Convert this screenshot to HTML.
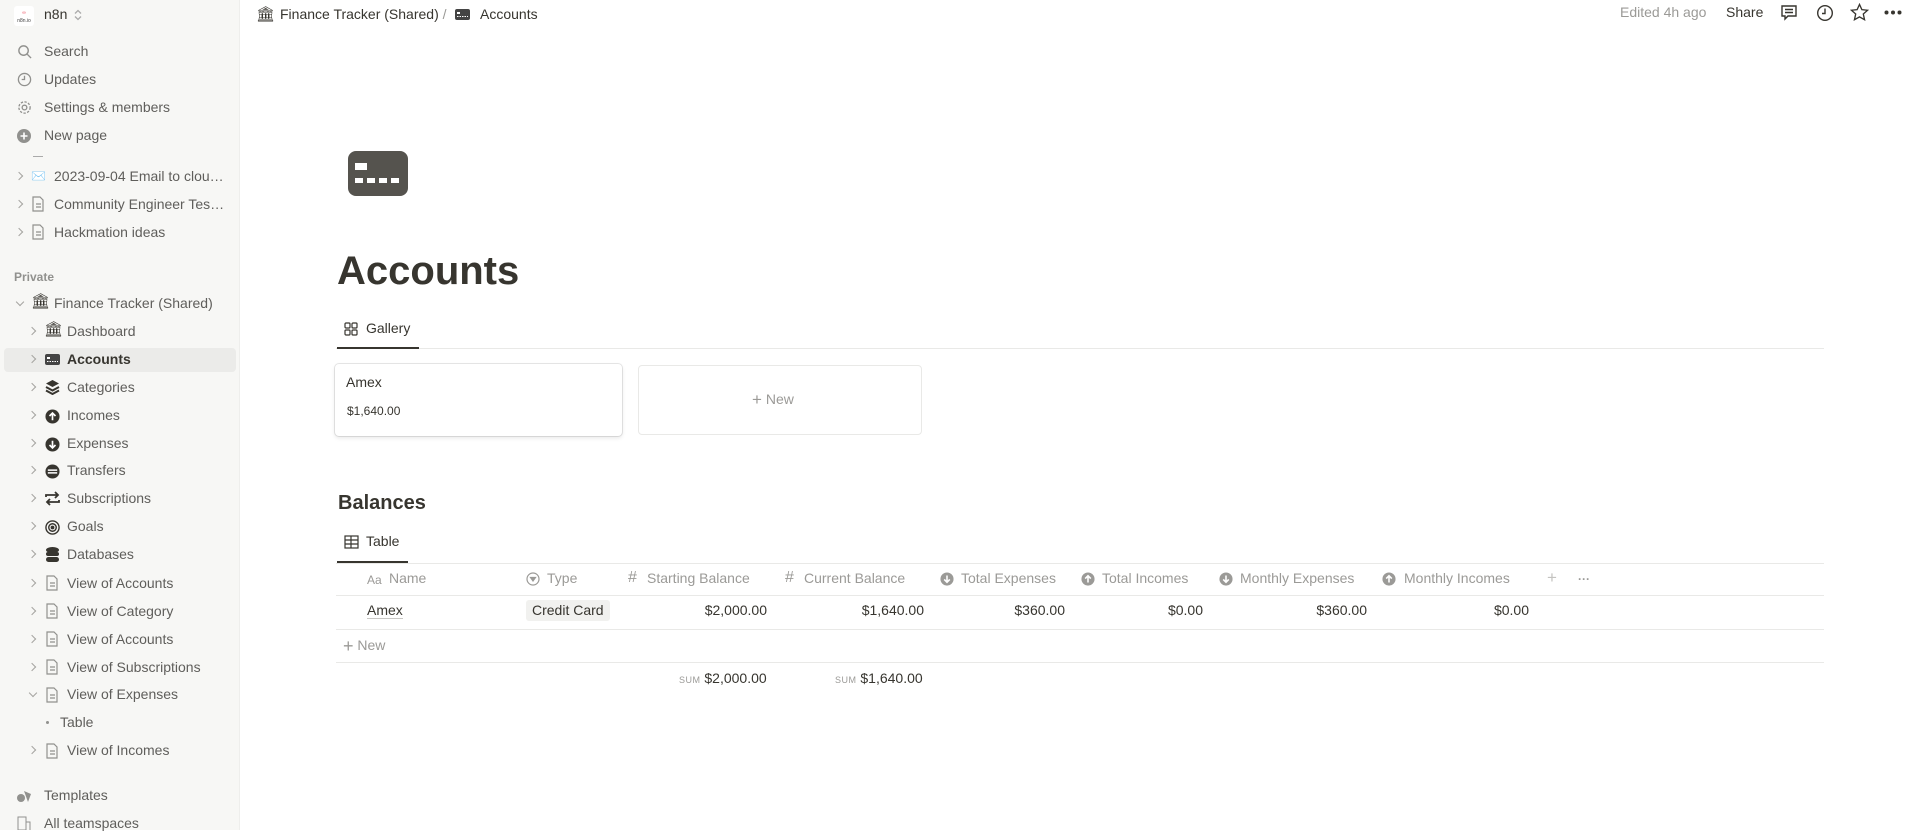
<!DOCTYPE html>
<html><head><meta charset="utf-8"><style>
*{margin:0;padding:0;box-sizing:border-box}
body{width:1919px;height:830px;overflow:hidden;background:#fff;font-family:"Liberation Sans",sans-serif;color:#37352f;position:relative}
.a{position:absolute;white-space:nowrap}
#sb{position:absolute;left:0;top:0;width:240px;height:830px;background:#f7f7f5;border-right:1px solid #eeeeec}
.si{position:absolute;font-size:14px;color:#5f5e5b;line-height:18px;white-space:nowrap}
.ic{position:absolute}
.chev{position:absolute;width:6px;height:6px;border-right:1.3px solid #a5a4a0;border-bottom:1.3px solid #a5a4a0;transform:rotate(-45deg)}
.chev.d{transform:rotate(45deg)}
.g{color:#9b9a97}
.hd{position:absolute;top:570px;font-size:14px;color:#9b9a97;white-space:nowrap}
.v{position:absolute;top:602px;font-size:14px;text-align:right;width:120px}
.hl{position:absolute;left:336px;width:1488px;height:1px;background:#e9e9e7}
</style></head><body>
<div id="sb">
<div class="a" style="left:14px;top:6px;width:20px;height:20px;background:#fff;border-radius:3px;font-size:5px;color:#e56;text-align:center;line-height:8px;padding-top:3px">∞<br><span style="color:#444">n8n.io</span></div>
<div class="a" style="left:44px;top:6px;font-size:14px;color:#37352f">n8n</div>
<svg class="ic" style="left:74px;top:9px" width="8" height="12" viewBox="0 0 8 12" fill="none" stroke="#aaa" stroke-width="1.3"><path d="M1 4.5L4 1.5 7 4.5M1 7.5L4 10.5 7 7.5"/></svg>

<svg class="ic" style="left:17px;top:44px" width="15" height="15" viewBox="0 0 16 16" fill="none" stroke="#91918e" stroke-width="1.5"><circle cx="7" cy="7" r="5"/><path d="M11 11l4 4"/></svg>
<div class="si" style="left:44px;top:42px">Search</div>
<svg class="ic" style="left:17px;top:72px" width="15" height="15" viewBox="0 0 16 16" fill="none" stroke="#91918e" stroke-width="1.4"><circle cx="8" cy="8" r="6.5"/><path d="M8 4v4H5"/></svg>
<div class="si" style="left:44px;top:70px">Updates</div>
<svg class="ic" style="left:17px;top:100px" width="15" height="15" viewBox="0 0 16 16" fill="none" stroke="#91918e" stroke-width="1.4"><circle cx="8" cy="8" r="2.5"/><circle cx="8" cy="8" r="6" stroke-dasharray="2.5 1.5"/></svg>
<div class="si" style="left:44px;top:98px">Settings &amp; members</div>
<svg class="ic" style="left:16px;top:128px" width="16" height="16" viewBox="0 0 16 16"><circle cx="8" cy="8" r="7" fill="#91918e"/><path d="M8 4.5v7M4.5 8h7" stroke="#fff" stroke-width="1.6"/></svg>
<div class="si" style="left:44px;top:126px">New page</div>
<div class="a" style="left:33px;top:156px;width:10px;height:1px;background:#aaa"></div>

<div class="chev" style="left:16px;top:173px"></div><div class="si" style="left:31px;top:167px;font-size:12px">✉️</div><div class="si" style="left:54px;top:167px">2023-09-04 Email to clou…</div>
<div class="chev" style="left:16px;top:201px"></div><svg class="ic" style="left:31px;top:196px" width="14" height="16" viewBox="0 0 14 16" fill="none" stroke="#91918e" stroke-width="1.2"><path d="M2 1h7l3 3v11H2z M5 8h5M5 11h5"/></svg><div class="si" style="left:54px;top:195px">Community Engineer Tes…</div>
<div class="chev" style="left:16px;top:229px"></div><svg class="ic" style="left:31px;top:224px" width="14" height="16" viewBox="0 0 14 16" fill="none" stroke="#91918e" stroke-width="1.2"><path d="M2 1h7l3 3v11H2z M5 8h5M5 11h5"/></svg><div class="si" style="left:54px;top:223px">Hackmation ideas</div>

<div class="si" style="left:14px;top:268px;font-size:12px;color:#91918e;font-weight:bold">Private</div>
<div class="chev d" style="left:17px;top:299px"></div><div class="si" style="left:31px;top:293px;font-size:15px;color:#37352f">🏛</div><div class="si" style="left:54px;top:294px">Finance Tracker (Shared)</div>

<div class="a" style="left:4px;top:348px;width:232px;height:24px;background:#ebebe9;border-radius:4px"></div>
<div class="chev" style="left:29px;top:328px"></div><div class="si" style="left:44px;top:321px;font-size:15px;color:#37352f">🏛</div><div class="si" style="left:67px;top:322px">Dashboard</div>
<div class="chev" style="left:29px;top:356px"></div><svg class="ic" style="left:45px;top:354px" width="15" height="11" viewBox="0 0 15 11"><rect width="15" height="11" rx="2" fill="#444"/><rect x="2" y="3" width="3" height="2" fill="#fff"/><path d="M2 7.5h11" stroke="#fff" stroke-dasharray="1.5 1"/></svg><div class="si" style="left:67px;top:350px;color:#37352f;font-weight:bold">Accounts</div>
<div class="chev" style="left:29px;top:384px"></div><svg class="ic" style="left:45px;top:379px" width="15" height="16" viewBox="0 0 15 16"><path d="M7.5 1L14 4.5 7.5 8 1 4.5z" fill="#37352f"/><path d="M1 8l6.5 3.5L14 8M1 11.5L7.5 15 14 11.5" fill="none" stroke="#37352f" stroke-width="2"/></svg><div class="si" style="left:67px;top:378px">Categories</div>
<svg class="ic" style="left:45px;top:409px" width="15" height="15" viewBox="0 0 16 16"><circle cx="8" cy="8" r="7.5" fill="#37352f"/><path d="M8 12V4.5M4.8 7.5L8 4.3l3.2 3.2" stroke="#fff" stroke-width="1.8" fill="none"/></svg><div class="chev" style="left:29px;top:412px"></div><div class="si" style="left:67px;top:406px">Incomes</div>
<svg class="ic" style="left:45px;top:437px" width="15" height="15" viewBox="0 0 16 16"><circle cx="8" cy="8" r="7.5" fill="#37352f"/><path d="M8 4v7.5M4.8 8.5L8 11.7l3.2-3.2" stroke="#fff" stroke-width="1.8" fill="none"/></svg><div class="chev" style="left:29px;top:440px"></div><div class="si" style="left:67px;top:434px">Expenses</div>
<svg class="ic" style="left:45px;top:464px" width="15" height="15" viewBox="0 0 16 16"><circle cx="8" cy="8" r="7.5" fill="#37352f"/><path d="M3 6.5h10M3 9.5h10" stroke="#fff" stroke-width="1.6"/></svg><div class="chev" style="left:29px;top:467px"></div><div class="si" style="left:67px;top:461px">Transfers</div>
<div class="chev" style="left:29px;top:495px"></div><svg class="ic" style="left:45px;top:491px" width="15" height="15" viewBox="0 0 15 15" fill="none" stroke="#37352f" stroke-width="1.8"><path d="M1 6V4h12M10 1l3 3-3 3M14 9v2H2M5 14l-3-3 3-3"/></svg><div class="si" style="left:67px;top:489px">Subscriptions</div>
<svg class="ic" style="left:45px;top:520px" width="15" height="15" viewBox="0 0 16 16" fill="none" stroke="#37352f" stroke-width="1.5"><circle cx="8" cy="8" r="7"/><circle cx="8" cy="8" r="4"/><circle cx="8" cy="8" r="1.3" fill="#37352f"/></svg><div class="chev" style="left:29px;top:523px"></div><div class="si" style="left:67px;top:517px">Goals</div>
<svg class="ic" style="left:46px;top:547px" width="13" height="16" viewBox="0 0 13 16"><ellipse cx="6.5" cy="3" rx="6.5" ry="3" fill="#37352f"/><rect y="5" width="13" height="4" rx="2" fill="#37352f"/><rect y="10" width="13" height="5" rx="2.5" fill="#37352f"/></svg><div class="chev" style="left:29px;top:551px"></div><div class="si" style="left:67px;top:545px">Databases</div>

<div class="chev" style="left:29px;top:580px"></div><svg class="ic" style="left:45px;top:575px" width="14" height="16" viewBox="0 0 14 16" fill="none" stroke="#91918e" stroke-width="1.2"><path d="M2 1h7l3 3v11H2z M5 8h5M5 11h5"/></svg><div class="si" style="left:67px;top:574px">View of Accounts</div>
<div class="chev" style="left:29px;top:608px"></div><svg class="ic" style="left:45px;top:603px" width="14" height="16" viewBox="0 0 14 16" fill="none" stroke="#91918e" stroke-width="1.2"><path d="M2 1h7l3 3v11H2z M5 8h5M5 11h5"/></svg><div class="si" style="left:67px;top:602px">View of Category</div>
<div class="chev" style="left:29px;top:636px"></div><svg class="ic" style="left:45px;top:631px" width="14" height="16" viewBox="0 0 14 16" fill="none" stroke="#91918e" stroke-width="1.2"><path d="M2 1h7l3 3v11H2z M5 8h5M5 11h5"/></svg><div class="si" style="left:67px;top:630px">View of Accounts</div>
<div class="chev" style="left:29px;top:664px"></div><svg class="ic" style="left:45px;top:659px" width="14" height="16" viewBox="0 0 14 16" fill="none" stroke="#91918e" stroke-width="1.2"><path d="M2 1h7l3 3v11H2z M5 8h5M5 11h5"/></svg><div class="si" style="left:67px;top:658px">View of Subscriptions</div>
<div class="chev d" style="left:30px;top:690px"></div><svg class="ic" style="left:45px;top:687px" width="14" height="16" viewBox="0 0 14 16" fill="none" stroke="#91918e" stroke-width="1.2"><path d="M2 1h7l3 3v11H2z M5 8h5M5 11h5"/></svg><div class="si" style="left:67px;top:685px">View of Expenses</div>
<div class="a" style="left:46px;top:721px;width:3px;height:3px;border-radius:50%;background:#91918e"></div><div class="si" style="left:60px;top:713px">Table</div>
<div class="chev" style="left:29px;top:747px"></div><svg class="ic" style="left:45px;top:743px" width="14" height="16" viewBox="0 0 14 16" fill="none" stroke="#91918e" stroke-width="1.2"><path d="M2 1h7l3 3v11H2z M5 8h5M5 11h5"/></svg><div class="si" style="left:67px;top:741px">View of Incomes</div>

<svg class="ic" style="left:16px;top:789px" width="17" height="15" viewBox="0 0 17 15"><circle cx="5" cy="9" r="4" fill="#91918e"/><path d="M8 2l7 3-3 8z" fill="#91918e"/></svg><div class="si" style="left:44px;top:786px">Templates</div>
<svg class="ic" style="left:17px;top:816px" width="14" height="14" viewBox="0 0 14 14" fill="none" stroke="#91918e"><rect x="1" y="1" width="8" height="13"/><path d="M9 6h4v8"/></svg><div class="si" style="left:44px;top:814px">All teamspaces</div>
</div>

<!-- top bar -->
<div class="a" style="left:256px;top:5px;font-size:15px">🏛</div>
<div class="a" style="left:280px;top:6px;font-size:14px">Finance Tracker (Shared) <span class="g">/</span></div>
<svg class="ic" style="left:455px;top:9px" width="15" height="11" viewBox="0 0 15 11"><rect width="15" height="11" rx="2" fill="#444"/><rect x="2" y="3" width="3" height="2" fill="#fff"/><path d="M2 7.5h11" stroke="#fff" stroke-dasharray="1.5 1"/></svg>
<div class="a" style="left:480px;top:6px;font-size:14px">Accounts</div>
<div class="a g" style="left:1620px;top:4px;font-size:14px">Edited 4h ago</div>
<div class="a" style="left:1726px;top:4px;font-size:14px">Share</div>
<svg class="ic" style="left:1780px;top:4px" width="18" height="18" viewBox="0 0 18 18" fill="none" stroke="#37352f" stroke-width="1.4"><path d="M2 2h14v10H8l-3 3v-3H2z M5 5.5h8M5 8.5h8"/></svg>
<svg class="ic" style="left:1816px;top:4px" width="18" height="18" viewBox="0 0 18 18" fill="none" stroke="#37352f" stroke-width="1.4"><circle cx="9" cy="9" r="7.3"/><path d="M9 4.5v5H6"/></svg>
<svg class="ic" style="left:1850px;top:3px" width="19" height="19" viewBox="0 0 20 20" fill="none" stroke="#37352f" stroke-width="1.4"><path d="M10 1.5l2.5 5.5 6 .6-4.5 4 1.3 6L10 14.6 4.7 17.6 6 11.6l-4.5-4 6-.6z"/></svg>
<svg class="ic" style="left:1884px;top:10px" width="18" height="5" viewBox="0 0 18 5" fill="#37352f"><circle cx="2.5" cy="2.5" r="2"/><circle cx="9" cy="2.5" r="2"/><circle cx="15.5" cy="2.5" r="2"/></svg>

<!-- page icon -->
<svg class="ic" style="left:348px;top:151px" width="60" height="45" viewBox="0 0 60 45"><rect width="60" height="45" rx="8" fill="#55534e"/><rect x="7" y="12" width="12" height="7" fill="#fff"/><rect x="7" y="27" width="8" height="5" fill="#fff"/><rect x="19" y="27" width="8" height="5" fill="#fff"/><rect x="31" y="27" width="8" height="5" fill="#fff"/><rect x="43" y="27" width="8" height="5" fill="#fff"/></svg>
<div class="a" style="left:337px;top:249px;font-size:40px;font-weight:bold;color:#37352f">Accounts</div>

<!-- gallery tab -->
<svg class="ic" style="left:344px;top:322px" width="14" height="14" viewBox="0 0 14 14" fill="none" stroke="#37352f" stroke-width="1.2"><rect x="1" y="1" width="5" height="5" rx="1"/><rect x="8" y="1" width="5" height="5" rx="1"/><rect x="1" y="8" width="5" height="5" rx="1"/><rect x="8" y="8" width="5" height="5" rx="1"/></svg>
<div class="a" style="left:366px;top:320px;font-size:14px">Gallery</div>
<div class="hl" style="top:348px"></div>
<div class="a" style="left:337px;top:347px;width:82px;height:2px;background:#37352f"></div>

<div class="a" style="left:335px;top:364px;width:287px;height:72px;border-radius:4px;box-shadow:0 0 0 1px rgba(15,15,15,.1),0 2px 4px rgba(15,15,15,.1)"></div>
<div class="a" style="left:346px;top:374px;font-size:14px">Amex</div>
<div class="a" style="left:347px;top:404px;font-size:12px">$1,640.00</div>
<div class="a" style="left:638px;top:365px;width:284px;height:70px;border:1px solid #e9e9e7;border-radius:4px"></div>
<div class="a g" style="left:752px;top:390px;font-size:14px"><span style="font-size:17px;vertical-align:-1px">+</span> New</div>

<!-- balances -->
<div class="a" style="left:338px;top:492px;font-size:20px;font-weight:bold">Balances</div>
<svg class="ic" style="left:344px;top:535px" width="15" height="14" viewBox="0 0 15 14" fill="none" stroke="#37352f" stroke-width="1.2"><rect x="1" y="1" width="13" height="12"/><path d="M1 5h13M1 9h13M7 1v12"/></svg>
<div class="a" style="left:366px;top:533px;font-size:14px">Table</div>
<div class="hl" style="top:563px"></div>
<div class="a" style="left:337px;top:561px;width:71px;height:2px;background:#37352f"></div>

<div class="hd" style="left:367px;font-size:12px;top:573px">Aa</div><div class="hd" style="left:389px">Name</div>
<svg class="ic" style="left:526px;top:572px" width="14" height="14" viewBox="0 0 14 14" fill="none" stroke="#9b9a97" stroke-width="1.2"><circle cx="7" cy="7" r="6"/><path d="M4.5 5.5h5L7 9z" fill="#9b9a97"/></svg><div class="hd" style="left:547px">Type</div>
<div class="hd" style="left:628px;font-size:16px;top:569px">#</div><div class="hd" style="left:647px">Starting Balance</div>
<div class="hd" style="left:785px;font-size:16px;top:569px">#</div><div class="hd" style="left:804px">Current Balance</div>
<svg class="ic" style="left:940px;top:572px" width="14" height="14" viewBox="0 0 16 16"><circle cx="8" cy="8" r="7.5" fill="#9b9a97"/><path d="M8 4v7.5M4.8 8.5L8 11.7l3.2-3.2" stroke="#fff" stroke-width="1.8" fill="none"/></svg><div class="hd" style="left:961px">Total Expenses</div>
<svg class="ic" style="left:1081px;top:572px" width="14" height="14" viewBox="0 0 16 16"><circle cx="8" cy="8" r="7.5" fill="#9b9a97"/><path d="M8 12V4.5M4.8 7.5L8 4.3l3.2 3.2" stroke="#fff" stroke-width="1.8" fill="none"/></svg><div class="hd" style="left:1102px">Total Incomes</div>
<svg class="ic" style="left:1219px;top:572px" width="14" height="14" viewBox="0 0 16 16"><circle cx="8" cy="8" r="7.5" fill="#9b9a97"/><path d="M8 4v7.5M4.8 8.5L8 11.7l3.2-3.2" stroke="#fff" stroke-width="1.8" fill="none"/></svg><div class="hd" style="left:1240px">Monthly Expenses</div>
<svg class="ic" style="left:1382px;top:572px" width="14" height="14" viewBox="0 0 16 16"><circle cx="8" cy="8" r="7.5" fill="#9b9a97"/><path d="M8 12V4.5M4.8 7.5L8 4.3l3.2 3.2" stroke="#fff" stroke-width="1.8" fill="none"/></svg><div class="hd" style="left:1404px">Monthly Incomes</div>
<div class="hd" style="left:1547px;font-size:17px;top:568px;color:#c4c3c0">+</div>
<div class="hd" style="left:1578px;font-size:12px;top:572px;font-weight:bold">···</div>
<div class="hl" style="top:595px"></div>

<div class="a" style="left:367px;top:602px;font-size:14px;border-bottom:1px solid #c8c7c4;line-height:16px">Amex</div>
<div class="a" style="left:526px;top:600px;height:21px;padding:0 6px;background:#f1f1ef;border-radius:3px;font-size:14px;line-height:21px">Credit Card</div>
<div class="v" style="left:647px">$2,000.00</div>
<div class="v" style="left:804px">$1,640.00</div>
<div class="v" style="left:945px">$360.00</div>
<div class="v" style="left:1083px">$0.00</div>
<div class="v" style="left:1247px">$360.00</div>
<div class="v" style="left:1409px">$0.00</div>
<div class="hl" style="top:629px"></div>
<div class="a g" style="left:343px;top:636px;font-size:14px"><span style="font-size:18px;vertical-align:-2px">+</span> New</div>
<div class="hl" style="top:662px"></div>
<div class="a" style="left:679px;top:670px;font-size:14px"><span class="g" style="font-size:9px;letter-spacing:.5px">SUM</span> $2,000.00</div>
<div class="a" style="left:835px;top:670px;font-size:14px"><span class="g" style="font-size:9px;letter-spacing:.5px">SUM</span> $1,640.00</div>
</body></html>
